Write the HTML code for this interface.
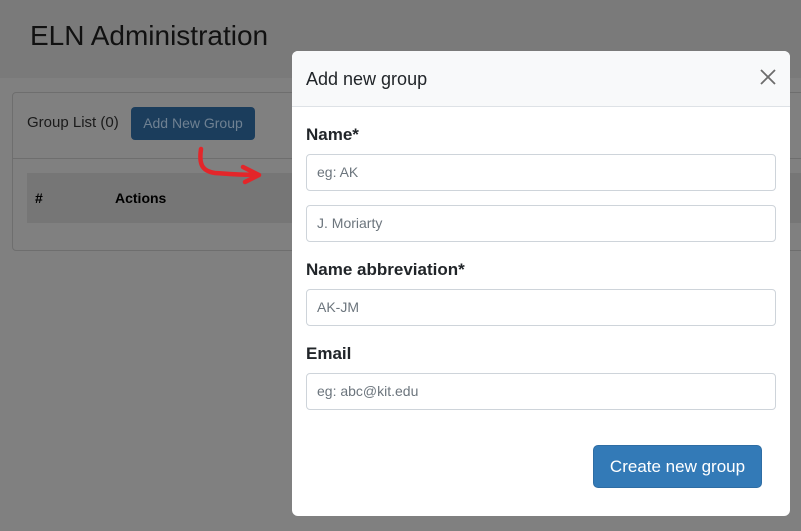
<!DOCTYPE html>
<html><head><style>
*{box-sizing:border-box;margin:0;padding:0}
body{width:801px;height:531px;overflow:hidden;background:#808080;font-family:"Liberation Sans",sans-serif;position:relative}
.hdr{position:absolute;left:0;top:0;width:801px;height:78px;background:#7a7a7a}
.hdr h1{position:absolute;left:30px;top:20px;font-size:28px;font-weight:normal;color:#111}
.card{position:absolute;left:12px;top:92px;width:800px;height:159px;border:1px solid #6e6e6e;border-radius:4px}
.cardtop{position:absolute;left:12px;top:158px;width:800px;border-top:1px solid #6e6e6e}
.gl{position:absolute;left:27px;top:114px;font-size:15px;color:#1a1a1a}
.anb{position:absolute;left:131px;top:107px;width:124px;height:33px;background:#1b3d5c;border-radius:4px;color:#6f8192;font-size:14px;text-align:center;line-height:33px}
.th{position:absolute;left:27px;top:173px;width:780px;height:50px;background:#767676}
.th span{position:absolute;top:17px;font-size:14px;font-weight:bold;color:#000}
.modal{position:absolute;left:292px;top:51px;width:498px;height:465px;background:#fff;border-radius:6px;overflow:hidden}
.mh{height:56px;background:#f8f9fa;border-bottom:1px solid #dee2e6;position:relative}
.mh h5{position:absolute;left:14px;top:18px;font-size:18px;font-weight:normal;color:#212529}
.x{position:absolute;right:14px;top:18px}
label{position:absolute;left:14px;font-size:17px;font-weight:bold;color:#212529}
.in{position:absolute;left:14px;width:470px;height:37px;border:1px solid #ced4da;border-radius:4px;font-size:14px;color:#6c757d;padding:9px 10px}
.btn{position:absolute;left:301px;top:394px;width:169px;height:43px;background:#337ab7;border:1px solid #2e6da4;border-radius:5px;color:#fff;font-size:17px;text-align:center;line-height:41px}
</style></head><body>
<div class="hdr"><h1>ELN Administration</h1></div>
<div class="card"></div><div class="cardtop"></div>
<div class="gl">Group List (0)</div>
<div class="anb">Add New Group</div>
<div class="th"><span style="left:8px">#</span><span style="left:88px">Actions</span></div>
<svg style="position:absolute;left:195px;top:145px" width="70" height="45"><path d="M6 4 C4 18 6 26 20 28 C34 29 46 30 62 30" stroke="#e3262a" stroke-width="4.5" fill="none" stroke-linecap="round"/><path d="M48 22 L64 30 L50 37" stroke="#e3262a" stroke-width="4.5" fill="none" stroke-linecap="round" stroke-linejoin="round"/></svg>
<div class="modal">
<div class="mh"><h5>Add new group</h5><svg class="x" width="16" height="16"><path d="M1 1L15 15M15 1L1 15" stroke="#6c6c6c" stroke-width="1.8"/></svg></div>
<label style="top:74px">Name*</label>
<div class="in" style="top:103px">eg: AK</div>
<div class="in" style="top:154px">J. Moriarty</div>
<label style="top:209px">Name abbreviation*</label>
<div class="in" style="top:238px">AK-JM</div>
<label style="top:293px">Email</label>
<div class="in" style="top:322px">eg: abc@kit.edu</div>
<div class="btn">Create new group</div>
</div>
</body></html>
